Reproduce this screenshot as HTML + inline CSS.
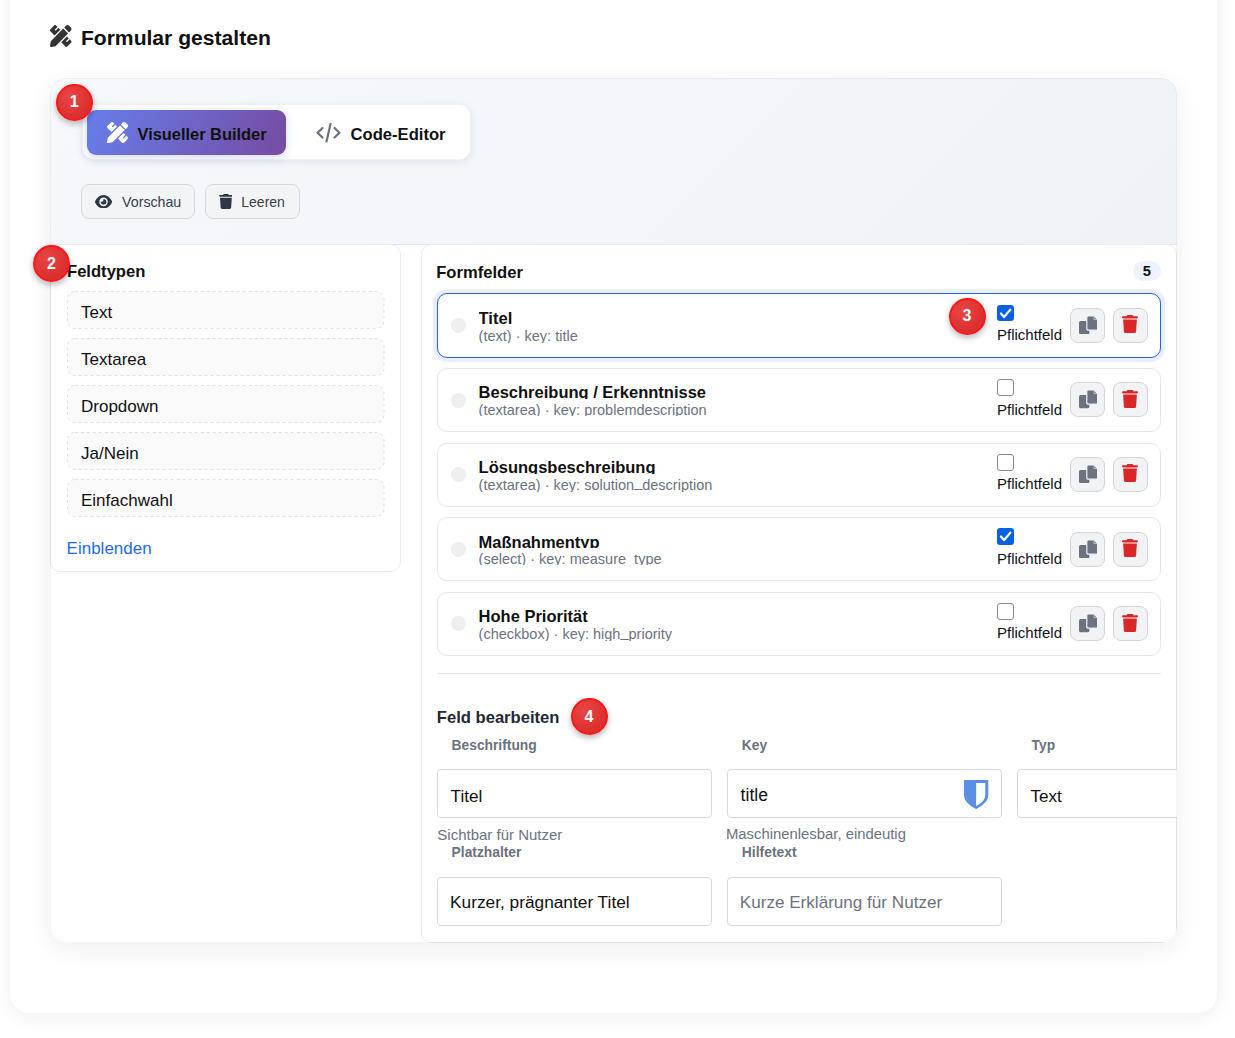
<!DOCTYPE html>
<html><head><meta charset="utf-8">
<style>
*{box-sizing:border-box;margin:0;padding:0}
html,body{width:1235px;height:1038px;overflow:hidden;background:#fff;font-family:"Liberation Sans",sans-serif;color:#111}
.t{position:absolute;white-space:nowrap;line-height:1}
.b{position:absolute}
.badge{position:absolute;border-radius:50%;background:radial-gradient(circle at 35% 30%,#e84545 0%,#dc2f2f 70%);border:2px solid #ff1616;color:#fff;font-weight:bold;text-align:center;box-shadow:0 3px 6px rgba(0,0,0,.28);z-index:20}
</style></head><body>
<div class="b" style="left:9px;top:-40px;width:1209.00px;height:1054.00px;background:#fff;border-radius:20px;border:1px solid rgba(0,0,0,.03);box-shadow:0 4px 20px rgba(0,0,0,.055)"></div>
<svg class="b" style="left:50px;top:25px;" width="21.50" height="22.00" viewBox="0 0 512 512" preserveAspectRatio="none"><path fill="#333" d="M109.46 244.04l134.58-134.56-44.12-44.12-61.68 61.68a7.919 7.919 0 0 1-11.21 0l-11.21-11.21c-3.1-3.1-3.1-8.12 0-11.21l61.68-61.68-33.64-33.65C131.47-3.1 111.39-3.1 99 9.29L9.29 99c-12.38 12.39-12.39 32.47 0 44.86l100.17 100.18zm388.47-116.8c18.76-18.76 18.75-49.17 0-67.930l-45.25-45.25c-18.76-18.76-49.18-18.760-67.95 0l-46.02 46.01 113.2 113.2 46.02-45.970zM316.08 82.71l-297 296.96L.32 487.11c-2.53 14.49 10.09 27.11 24.59 24.56l107.45-18.84L429.28 195.9 316.08 82.71zm186.63 285.43l-33.64-33.64-61.68 61.68c-3.1 3.1-8.12 3.1-11.21 0l-11.21-11.21c-3.09-3.1-3.09-8.12 0-11.21l61.68-61.68-44.14-44.14L267.93 402.5l100.21 100.2c12.39 12.39 32.47 12.39 44.86 0l89.71-89.7c12.39-12.39 12.39-32.47 0-44.86z"/></svg>
<div class="t" style="left:80.90px;top:27.13px;font-size:21.1px;font-weight:bold;color:#111;">Formular gestalten</div>
<div class="b" style="left:50px;top:78px;width:1127px;height:865px;border-radius:16px;background:#fff;box-shadow:0 6px 24px rgba(0,0,0,.07);overflow:hidden">
<div class="b" style="left:-50px;top:-78px;width:1235px;height:1038px">
<div class="b" style="left:50px;top:78px;width:1127.00px;height:167.00px;background:linear-gradient(135deg,#f6f8fb 0%,#f2f6fa 50%,#eff3f8 100%);border-bottom:1px solid #e0e6ee"></div>
<div class="b" style="left:82px;top:104px;width:389.00px;height:56.00px;background:#fff;border-radius:12px;border:1px solid rgba(40,60,120,.07);box-shadow:0 2px 8px rgba(70,80,140,.12)"></div>
<div class="b" style="left:87px;top:110px;width:199.00px;height:45.00px;background:linear-gradient(115deg,#667eea 0%,#764ba2 100%);border-radius:9px;box-shadow:0 2px 8px rgba(102,126,234,.3)"></div>
<svg class="b" style="left:106.7px;top:121.8px;" width="21.10" height="21.10" viewBox="0 0 512 512" preserveAspectRatio="none"><path fill="#fff" d="M109.46 244.04l134.58-134.56-44.12-44.12-61.68 61.68a7.919 7.919 0 0 1-11.21 0l-11.21-11.21c-3.1-3.1-3.1-8.12 0-11.21l61.68-61.68-33.64-33.65C131.47-3.1 111.39-3.1 99 9.29L9.29 99c-12.38 12.39-12.39 32.47 0 44.86l100.17 100.18zm388.47-116.8c18.76-18.76 18.75-49.17 0-67.930l-45.25-45.25c-18.76-18.76-49.18-18.760-67.95 0l-46.02 46.01 113.2 113.2 46.02-45.970zM316.08 82.71l-297 296.96L.32 487.11c-2.53 14.49 10.09 27.11 24.59 24.56l107.45-18.84L429.28 195.9 316.08 82.71zm186.63 285.43l-33.64-33.64-61.68 61.68c-3.1 3.1-8.12 3.1-11.21 0l-11.21-11.21c-3.09-3.1-3.09-8.12 0-11.21l61.68-61.68-44.14-44.14L267.93 402.5l100.21 100.2c12.39 12.39 32.47 12.39 44.86 0l89.71-89.7c12.39-12.39 12.39-32.47 0-44.86z"/></svg>
<div class="t" style="left:137.50px;top:125.61px;font-size:16.4px;font-weight:bold;color:#111;">Visueller Builder</div>
<svg class="b" style="left:316px;top:123px;" width="25.00" height="19.50" viewBox="0 0 25 19.5" preserveAspectRatio="none"><path d="M6.5 5 L1.5 9.75 L6.5 14.5 M18.5 5 L23.5 9.75 L18.5 14.5 M14.5 1 L10.5 18.5" fill="none" stroke="#6b7280" stroke-width="2.2" stroke-linecap="round" stroke-linejoin="round"/></svg>
<div class="t" style="left:350.60px;top:126.94px;font-size:16.6px;font-weight:bold;color:#111;">Code-Editor</div>
<div class="b" style="left:81px;top:184px;width:113.50px;height:34.50px;background:#f3f4f6;border:1px solid #d5d8dd;border-radius:8px"></div>
<svg class="b" style="left:94.6px;top:194.6px;" width="17.10" height="13.60" viewBox="0 32 576 448" preserveAspectRatio="none"><path fill="#2d3748" d="M288 32c-80.8 0-145.5 36.8-192.6 80.6C48.6 156 17.3 208 2.5 243.7c-3.3 7.9-3.3 16.7 0 24.6C17.3 304 48.6 356 95.4 399.4C142.5 443.2 207.2 480 288 480s145.5-36.8 192.6-80.6c46.8-43.5 78.1-95.4 93-131.1c3.3-7.9 3.3-16.7 0-24.6c-14.9-35.7-46.2-87.7-93-131.1C433.5 68.8 368.8 32 288 32zM144 256a144 144 0 1 1 288 0 144 144 0 1 1 -288 0zm144-64c0 35.3-28.7 64-64 64c-7.1 0-13.9-1.2-20.3-3.3c-5.5-1.8-11.9 1.6-11.7 7.4c.3 6.9 1.3 13.8 3.2 20.7c13.7 51.2 66.4 81.6 117.6 67.9s81.6-66.4 67.9-117.6c-11.1-41.5-47.8-69.4-88.6-71.1c-5.8-.2-9.2 6.1-7.4 11.7c2.1 6.4 3.3 13.2 3.3 20.3z"/></svg>
<div class="t" style="left:122.10px;top:194.78px;font-size:14.2px;color:#374151;">Vorschau</div>
<div class="b" style="left:205.4px;top:184px;width:94.40px;height:34.50px;background:#f3f4f6;border:1px solid #d5d8dd;border-radius:8px"></div>
<svg class="b" style="left:218.6px;top:193.8px;" width="13.80" height="14.90" viewBox="0 0 448 512" preserveAspectRatio="none"><path fill="#2d3748" d="M135.2 17.7L128 32H32C14.3 32 0 46.3 0 64S14.3 96 32 96H416c17.7 0 32-14.3 32-32s-14.3-32-32-32H320l-7.2-14.3C307.4 6.8 296.3 0 284.2 0H163.8c-12.1 0-23.2 6.8-28.6 17.7zM416 128H32L53.2 467c1.6 25.3 22.6 45 47.9 45H346.9c25.3 0 46.3-19.7 47.9-45L416 128z"/></svg>
<div class="t" style="left:241.30px;top:195.45px;font-size:14.0px;color:#374151;">Leeren</div>
<div class="b" style="left:50px;top:244px;width:351.00px;height:328.00px;background:#fff;border:1px solid #ebebec;border-radius:10px"></div>
<div class="t" style="left:67.00px;top:264.34px;font-size:16.6px;font-weight:bold;color:#111;">Feldtypen</div>
<svg class="b" style="left:67px;top:291px;" width="317.50" height="38.00" viewBox="0 0 317.5 38" preserveAspectRatio="none"><rect x="0.5" y="0.5" width="316.5" height="37" rx="7.5" fill="#fafafa" stroke="#dcdfe3" stroke-width="1" stroke-dasharray="2.6 3.4"/></svg>
<div class="t" style="left:81.00px;top:303.61px;font-size:17px;color:#111;">Text</div>
<svg class="b" style="left:67px;top:338px;" width="317.50" height="38.00" viewBox="0 0 317.5 38" preserveAspectRatio="none"><rect x="0.5" y="0.5" width="316.5" height="37" rx="7.5" fill="#fafafa" stroke="#dcdfe3" stroke-width="1" stroke-dasharray="2.6 3.4"/></svg>
<div class="t" style="left:81.00px;top:350.61px;font-size:17px;color:#111;">Textarea</div>
<svg class="b" style="left:67px;top:385px;" width="317.50" height="38.00" viewBox="0 0 317.5 38" preserveAspectRatio="none"><rect x="0.5" y="0.5" width="316.5" height="37" rx="7.5" fill="#fafafa" stroke="#dcdfe3" stroke-width="1" stroke-dasharray="2.6 3.4"/></svg>
<div class="t" style="left:81.00px;top:397.61px;font-size:17px;color:#111;">Dropdown</div>
<svg class="b" style="left:67px;top:432px;" width="317.50" height="38.00" viewBox="0 0 317.5 38" preserveAspectRatio="none"><rect x="0.5" y="0.5" width="316.5" height="37" rx="7.5" fill="#fafafa" stroke="#dcdfe3" stroke-width="1" stroke-dasharray="2.6 3.4"/></svg>
<div class="t" style="left:81.00px;top:444.61px;font-size:17px;color:#111;">Ja/Nein</div>
<svg class="b" style="left:67px;top:479px;" width="317.50" height="38.00" viewBox="0 0 317.5 38" preserveAspectRatio="none"><rect x="0.5" y="0.5" width="316.5" height="37" rx="7.5" fill="#fafafa" stroke="#dcdfe3" stroke-width="1" stroke-dasharray="2.6 3.4"/></svg>
<div class="t" style="left:81.00px;top:491.61px;font-size:17px;color:#111;">Einfachwahl</div>
<div class="t" style="left:66.60px;top:540.01px;font-size:17px;color:#1f6bf2;">Einblenden</div>
<div class="b" style="left:421px;top:244px;width:756.00px;height:699.00px;background:#fff;border:1px solid #ebebec;border-radius:10px"></div>
<div class="t" style="left:436.20px;top:265.14px;font-size:16.6px;font-weight:bold;color:#111;">Formfelder</div>
<div class="b" style="left:1133px;top:261px;width:28.00px;height:20.00px;background:#eef2fb;border-radius:10px"></div>
<div class="t" style="left:1142.70px;top:264.15px;font-size:14.7px;font-weight:bold;color:#111;">5</div>
<div class="b" style="left:437px;top:293.4px;width:724.00px;height:64.60px;background:#fff;border:1.6px solid #2463e6;border-radius:10px;box-shadow:0 0 0 4px rgba(37,99,230,.1)"></div>
<div class="b" style="left:451px;top:317.9px;width:15.00px;height:15.00px;background:#eeeff1;border-radius:50%"></div>
<div class="t" style="left:478.60px;top:309.83px;height:15.17px;width:400px;overflow:hidden;font-size:16.5px;font-weight:bold;color:#111">Titel</div>
<div class="t" style="left:478.60px;top:329.12px;height:14.28px;width:400px;overflow:hidden;font-size:14.5px;color:#6b7280">(text) · key: title</div>
<div class="b" style="left:997px;top:304.59999999999997px;width:17.00px;height:16.80px;background:#0a61df;border-radius:3px"></div>
<svg class="b" style="left:997px;top:304.59999999999997px;" width="17.00" height="16.80" viewBox="0 0 17 17" preserveAspectRatio="none"><path d="M3.9 8.6 L7.1 12.2 L13.4 4.7" fill="none" stroke="#fff" stroke-width="2.2" stroke-linecap="round" stroke-linejoin="round"/></svg>
<div class="t" style="left:997.00px;top:326.90px;font-size:15px;color:#111;">Pflichtfeld</div>
<div class="b" style="left:1070.2px;top:307.7px;width:34.70px;height:35.00px;background:#f1f3f5;border:1px solid #d2d6dc;border-radius:8px"></div>
<svg class="b" style="left:1078.5px;top:315.79999999999995px;" width="18.60" height="18.40" viewBox="0 0 18.6 18.4" preserveAspectRatio="none"><rect x="0" y="5" width="10.4" height="13.2" rx="1.6" fill="#6b7280"/><path fill="#6b7280" stroke="#f1f3f5" stroke-width="1.2" d="M9.4 -0.2 H15 L18.8 3.6 V12.6 Q18.8 14.2 17.2 14.2 H9.4 Q7.8 14.2 7.8 12.6 V1.4 Q7.8 -0.2 9.4 -0.2 Z"/><path d="M15 0.3 V3.6 H18.4" fill="none" stroke="#c3c8cf" stroke-width="0.9"/></svg>
<div class="b" style="left:1113.3px;top:307.7px;width:34.70px;height:35.00px;background:#f1f3f5;border:1px solid #d2d6dc;border-radius:8px"></div>
<svg class="b" style="left:1122px;top:315.2px;" width="16.00" height="18.10" viewBox="0 0 448 512" preserveAspectRatio="none"><path fill="#dc2626" d="M135.2 17.7L128 32H32C14.3 32 0 46.3 0 64S14.3 96 32 96H416c17.7 0 32-14.3 32-32s-14.3-32-32-32H320l-7.2-14.3C307.4 6.8 296.3 0 284.2 0H163.8c-12.1 0-23.2 6.8-28.6 17.7zM416 128H32L53.2 467c1.6 25.3 22.6 45 47.9 45H346.9c25.3 0 46.3-19.7 47.9-45L416 128z"/></svg>
<div class="b" style="left:437px;top:368.0px;width:724.00px;height:64.00px;background:#fff;border:1px solid #e5e7eb;border-radius:10px"></div>
<div class="b" style="left:451px;top:392.5px;width:15.00px;height:15.00px;background:#eeeff1;border-radius:50%"></div>
<div class="t" style="left:478.60px;top:384.43px;height:14.97px;width:400px;overflow:hidden;font-size:16.5px;font-weight:bold;color:#111">Beschreibung / Erkenntnisse</div>
<div class="t" style="left:478.60px;top:402.92px;height:13.28px;width:400px;overflow:hidden;font-size:14.5px;color:#6b7280">(textarea) · key: problemdescription</div>
<div class="b" style="left:997px;top:379.2px;width:17.00px;height:16.80px;background:#fff;border:1px solid #8a8a8a;border-radius:3px"></div>
<div class="t" style="left:997.00px;top:401.50px;font-size:15px;color:#111;">Pflichtfeld</div>
<div class="b" style="left:1070.2px;top:382.3px;width:34.70px;height:35.00px;background:#f1f3f5;border:1px solid #d2d6dc;border-radius:8px"></div>
<svg class="b" style="left:1078.5px;top:390.4px;" width="18.60" height="18.40" viewBox="0 0 18.6 18.4" preserveAspectRatio="none"><rect x="0" y="5" width="10.4" height="13.2" rx="1.6" fill="#6b7280"/><path fill="#6b7280" stroke="#f1f3f5" stroke-width="1.2" d="M9.4 -0.2 H15 L18.8 3.6 V12.6 Q18.8 14.2 17.2 14.2 H9.4 Q7.8 14.2 7.8 12.6 V1.4 Q7.8 -0.2 9.4 -0.2 Z"/><path d="M15 0.3 V3.6 H18.4" fill="none" stroke="#c3c8cf" stroke-width="0.9"/></svg>
<div class="b" style="left:1113.3px;top:382.3px;width:34.70px;height:35.00px;background:#f1f3f5;border:1px solid #d2d6dc;border-radius:8px"></div>
<svg class="b" style="left:1122px;top:389.8px;" width="16.00" height="18.10" viewBox="0 0 448 512" preserveAspectRatio="none"><path fill="#dc2626" d="M135.2 17.7L128 32H32C14.3 32 0 46.3 0 64S14.3 96 32 96H416c17.7 0 32-14.3 32-32s-14.3-32-32-32H320l-7.2-14.3C307.4 6.8 296.3 0 284.2 0H163.8c-12.1 0-23.2 6.8-28.6 17.7zM416 128H32L53.2 467c1.6 25.3 22.6 45 47.9 45H346.9c25.3 0 46.3-19.7 47.9-45L416 128z"/></svg>
<div class="b" style="left:437px;top:442.59999999999997px;width:724.00px;height:64.00px;background:#fff;border:1px solid #e5e7eb;border-radius:10px"></div>
<div class="b" style="left:451px;top:467.09999999999997px;width:15.00px;height:15.00px;background:#eeeff1;border-radius:50%"></div>
<div class="t" style="left:478.60px;top:459.03px;height:14.67px;width:400px;overflow:hidden;font-size:16.5px;font-weight:bold;color:#111">Lösungsbeschreibung</div>
<div class="t" style="left:478.60px;top:477.52px;height:14.28px;width:400px;overflow:hidden;font-size:14.5px;color:#6b7280">(textarea) · key: solution<span style="position:relative;top:-2.2px">_</span>description</div>
<div class="b" style="left:997px;top:453.79999999999995px;width:17.00px;height:16.80px;background:#fff;border:1px solid #8a8a8a;border-radius:3px"></div>
<div class="t" style="left:997.00px;top:476.10px;font-size:15px;color:#111;">Pflichtfeld</div>
<div class="b" style="left:1070.2px;top:456.9px;width:34.70px;height:35.00px;background:#f1f3f5;border:1px solid #d2d6dc;border-radius:8px"></div>
<svg class="b" style="left:1078.5px;top:464.99999999999994px;" width="18.60" height="18.40" viewBox="0 0 18.6 18.4" preserveAspectRatio="none"><rect x="0" y="5" width="10.4" height="13.2" rx="1.6" fill="#6b7280"/><path fill="#6b7280" stroke="#f1f3f5" stroke-width="1.2" d="M9.4 -0.2 H15 L18.8 3.6 V12.6 Q18.8 14.2 17.2 14.2 H9.4 Q7.8 14.2 7.8 12.6 V1.4 Q7.8 -0.2 9.4 -0.2 Z"/><path d="M15 0.3 V3.6 H18.4" fill="none" stroke="#c3c8cf" stroke-width="0.9"/></svg>
<div class="b" style="left:1113.3px;top:456.9px;width:34.70px;height:35.00px;background:#f1f3f5;border:1px solid #d2d6dc;border-radius:8px"></div>
<svg class="b" style="left:1122px;top:464.4px;" width="16.00" height="18.10" viewBox="0 0 448 512" preserveAspectRatio="none"><path fill="#dc2626" d="M135.2 17.7L128 32H32C14.3 32 0 46.3 0 64S14.3 96 32 96H416c17.7 0 32-14.3 32-32s-14.3-32-32-32H320l-7.2-14.3C307.4 6.8 296.3 0 284.2 0H163.8c-12.1 0-23.2 6.8-28.6 17.7zM416 128H32L53.2 467c1.6 25.3 22.6 45 47.9 45H346.9c25.3 0 46.3-19.7 47.9-45L416 128z"/></svg>
<div class="b" style="left:437px;top:517.1999999999999px;width:724.00px;height:64.00px;background:#fff;border:1px solid #e5e7eb;border-radius:10px"></div>
<div class="b" style="left:451px;top:541.6999999999999px;width:15.00px;height:15.00px;background:#eeeff1;border-radius:50%"></div>
<div class="t" style="left:478.60px;top:533.63px;height:14.77px;width:400px;overflow:hidden;font-size:16.5px;font-weight:bold;color:#111">Maßnahmentyp</div>
<div class="t" style="left:478.60px;top:552.12px;height:13.08px;width:400px;overflow:hidden;font-size:14.5px;color:#6b7280">(select) · key: measure_type</div>
<div class="b" style="left:997px;top:528.4px;width:17.00px;height:16.80px;background:#0a61df;border-radius:3px"></div>
<svg class="b" style="left:997px;top:528.4px;" width="17.00" height="16.80" viewBox="0 0 17 17" preserveAspectRatio="none"><path d="M3.9 8.6 L7.1 12.2 L13.4 4.7" fill="none" stroke="#fff" stroke-width="2.2" stroke-linecap="round" stroke-linejoin="round"/></svg>
<div class="t" style="left:997.00px;top:550.70px;font-size:15px;color:#111;">Pflichtfeld</div>
<div class="b" style="left:1070.2px;top:531.4999999999999px;width:34.70px;height:35.00px;background:#f1f3f5;border:1px solid #d2d6dc;border-radius:8px"></div>
<svg class="b" style="left:1078.5px;top:539.5999999999999px;" width="18.60" height="18.40" viewBox="0 0 18.6 18.4" preserveAspectRatio="none"><rect x="0" y="5" width="10.4" height="13.2" rx="1.6" fill="#6b7280"/><path fill="#6b7280" stroke="#f1f3f5" stroke-width="1.2" d="M9.4 -0.2 H15 L18.8 3.6 V12.6 Q18.8 14.2 17.2 14.2 H9.4 Q7.8 14.2 7.8 12.6 V1.4 Q7.8 -0.2 9.4 -0.2 Z"/><path d="M15 0.3 V3.6 H18.4" fill="none" stroke="#c3c8cf" stroke-width="0.9"/></svg>
<div class="b" style="left:1113.3px;top:531.4999999999999px;width:34.70px;height:35.00px;background:#f1f3f5;border:1px solid #d2d6dc;border-radius:8px"></div>
<svg class="b" style="left:1122px;top:538.9999999999999px;" width="16.00" height="18.10" viewBox="0 0 448 512" preserveAspectRatio="none"><path fill="#dc2626" d="M135.2 17.7L128 32H32C14.3 32 0 46.3 0 64S14.3 96 32 96H416c17.7 0 32-14.3 32-32s-14.3-32-32-32H320l-7.2-14.3C307.4 6.8 296.3 0 284.2 0H163.8c-12.1 0-23.2 6.8-28.6 17.7zM416 128H32L53.2 467c1.6 25.3 22.6 45 47.9 45H346.9c25.3 0 46.3-19.7 47.9-45L416 128z"/></svg>
<div class="b" style="left:437px;top:591.8px;width:724.00px;height:64.00px;background:#fff;border:1px solid #e5e7eb;border-radius:10px"></div>
<div class="b" style="left:451px;top:616.3px;width:15.00px;height:15.00px;background:#eeeff1;border-radius:50%"></div>
<div class="t" style="left:478.60px;top:608.23px;height:14.97px;width:400px;overflow:hidden;font-size:16.5px;font-weight:bold;color:#111">Hohe Priorität</div>
<div class="t" style="left:478.60px;top:626.72px;height:13.88px;width:400px;overflow:hidden;font-size:14.5px;color:#6b7280">(checkbox) · key: high<span style="position:relative;top:-2.2px">_</span>priority</div>
<div class="b" style="left:997px;top:603.0px;width:17.00px;height:16.80px;background:#fff;border:1px solid #8a8a8a;border-radius:3px"></div>
<div class="t" style="left:997.00px;top:625.30px;font-size:15px;color:#111;">Pflichtfeld</div>
<div class="b" style="left:1070.2px;top:606.0999999999999px;width:34.70px;height:35.00px;background:#f1f3f5;border:1px solid #d2d6dc;border-radius:8px"></div>
<svg class="b" style="left:1078.5px;top:614.1999999999999px;" width="18.60" height="18.40" viewBox="0 0 18.6 18.4" preserveAspectRatio="none"><rect x="0" y="5" width="10.4" height="13.2" rx="1.6" fill="#6b7280"/><path fill="#6b7280" stroke="#f1f3f5" stroke-width="1.2" d="M9.4 -0.2 H15 L18.8 3.6 V12.6 Q18.8 14.2 17.2 14.2 H9.4 Q7.8 14.2 7.8 12.6 V1.4 Q7.8 -0.2 9.4 -0.2 Z"/><path d="M15 0.3 V3.6 H18.4" fill="none" stroke="#c3c8cf" stroke-width="0.9"/></svg>
<div class="b" style="left:1113.3px;top:606.0999999999999px;width:34.70px;height:35.00px;background:#f1f3f5;border:1px solid #d2d6dc;border-radius:8px"></div>
<svg class="b" style="left:1122px;top:613.5999999999999px;" width="16.00" height="18.10" viewBox="0 0 448 512" preserveAspectRatio="none"><path fill="#dc2626" d="M135.2 17.7L128 32H32C14.3 32 0 46.3 0 64S14.3 96 32 96H416c17.7 0 32-14.3 32-32s-14.3-32-32-32H320l-7.2-14.3C307.4 6.8 296.3 0 284.2 0H163.8c-12.1 0-23.2 6.8-28.6 17.7zM416 128H32L53.2 467c1.6 25.3 22.6 45 47.9 45H346.9c25.3 0 46.3-19.7 47.9-45L416 128z"/></svg>
<div class="b" style="left:437px;top:673px;width:724.00px;height:1.00px;background:#e5e7eb"></div>
<div class="t" style="left:436.80px;top:709.54px;font-size:16.6px;font-weight:bold;color:#1f2937;">Feld bearbeiten</div>
<div class="t" style="left:451.60px;top:738.52px;font-size:13.8px;font-weight:bold;color:#6b7280;">Beschriftung</div>
<div class="t" style="left:741.80px;top:738.92px;font-size:13.8px;font-weight:bold;color:#6b7280;">Key</div>
<div class="t" style="left:1031.60px;top:738.92px;font-size:13.8px;font-weight:bold;color:#6b7280;">Typ</div>
<div class="b" style="left:437px;top:769px;width:275.00px;height:49.00px;background:#fff;border:1px solid #d8dadd;border-radius:4px"></div>
<div class="b" style="left:727px;top:769px;width:275.00px;height:49.00px;background:#fff;border:1px solid #d8dadd;border-radius:4px"></div>
<div class="b" style="left:1017px;top:769px;width:275.00px;height:49.00px;background:#fff;border:1px solid #d8dadd;border-radius:4px"></div>
<div class="t" style="left:450.60px;top:787.62px;font-size:17.1px;color:#111;">Titel</div>
<div class="t" style="left:740.60px;top:787.20px;font-size:17.6px;color:#111;">title</div>
<div class="t" style="left:1030.40px;top:787.52px;font-size:17.1px;color:#111;">Text</div>
<svg class="b" style="left:964.3px;top:779.9px;" width="24.30" height="29.10" viewBox="0 0 24 29" preserveAspectRatio="none"><path fill="#5b8ee6" d="M0 0 H24 V15 Q24 23 12 29 Q0 23 0 15 Z"/><path fill="#fff" d="M12 3 H21 V15 Q21 21.5 12 25.8 Z"/></svg>
<div class="t" style="left:437.30px;top:826.90px;font-size:15px;color:#6b7280;">Sichtbar für Nutzer</div>
<div class="t" style="left:726.00px;top:827.33px;font-size:14.85px;color:#6b7280;">Maschinenlesbar, eindeutig</div>
<div class="t" style="left:451.60px;top:846.22px;font-size:13.8px;font-weight:bold;color:#6b7280;">Platzhalter</div>
<div class="t" style="left:741.80px;top:846.13px;font-size:13.9px;font-weight:bold;color:#6b7280;">Hilfetext</div>
<div class="b" style="left:437px;top:877px;width:275.00px;height:49.00px;background:#fff;border:1px solid #d8dadd;border-radius:4px"></div>
<div class="b" style="left:727px;top:877px;width:275.00px;height:49.00px;background:#fff;border:1px solid #d8dadd;border-radius:4px"></div>
<div class="t" style="left:450.00px;top:894.25px;font-size:17.3px;color:#111;">Kurzer, prägnanter Titel</div>
<div class="t" style="left:739.80px;top:894.42px;font-size:17.1px;color:#6b7280;">Kurze Erklärung für Nutzer</div>
</div><div class="b" style="left:0;top:0;width:1127px;height:865px;border-radius:16px;border:1px solid rgba(0,0,0,.04);z-index:5"></div></div>
<div class="badge" style="left:55.7px;top:83.6px;width:37px;height:37px;"><span style="position:absolute;left:0;right:0;top:8.7px;line-height:16px;font-size:16px">1</span></div>
<div class="badge" style="left:33.0px;top:245.3px;width:37px;height:37px;"><span style="position:absolute;left:0;right:0;top:8.7px;line-height:16px;font-size:16px">2</span></div>
<div class="badge" style="left:948.5px;top:297.5px;width:37px;height:37px;"><span style="position:absolute;left:0;right:0;top:8.7px;line-height:16px;font-size:16px">3</span></div>
<div class="badge" style="left:570.5px;top:697.9px;width:37px;height:37px;"><span style="position:absolute;left:0;right:0;top:8.7px;line-height:16px;font-size:16px">4</span></div>
</body></html>
